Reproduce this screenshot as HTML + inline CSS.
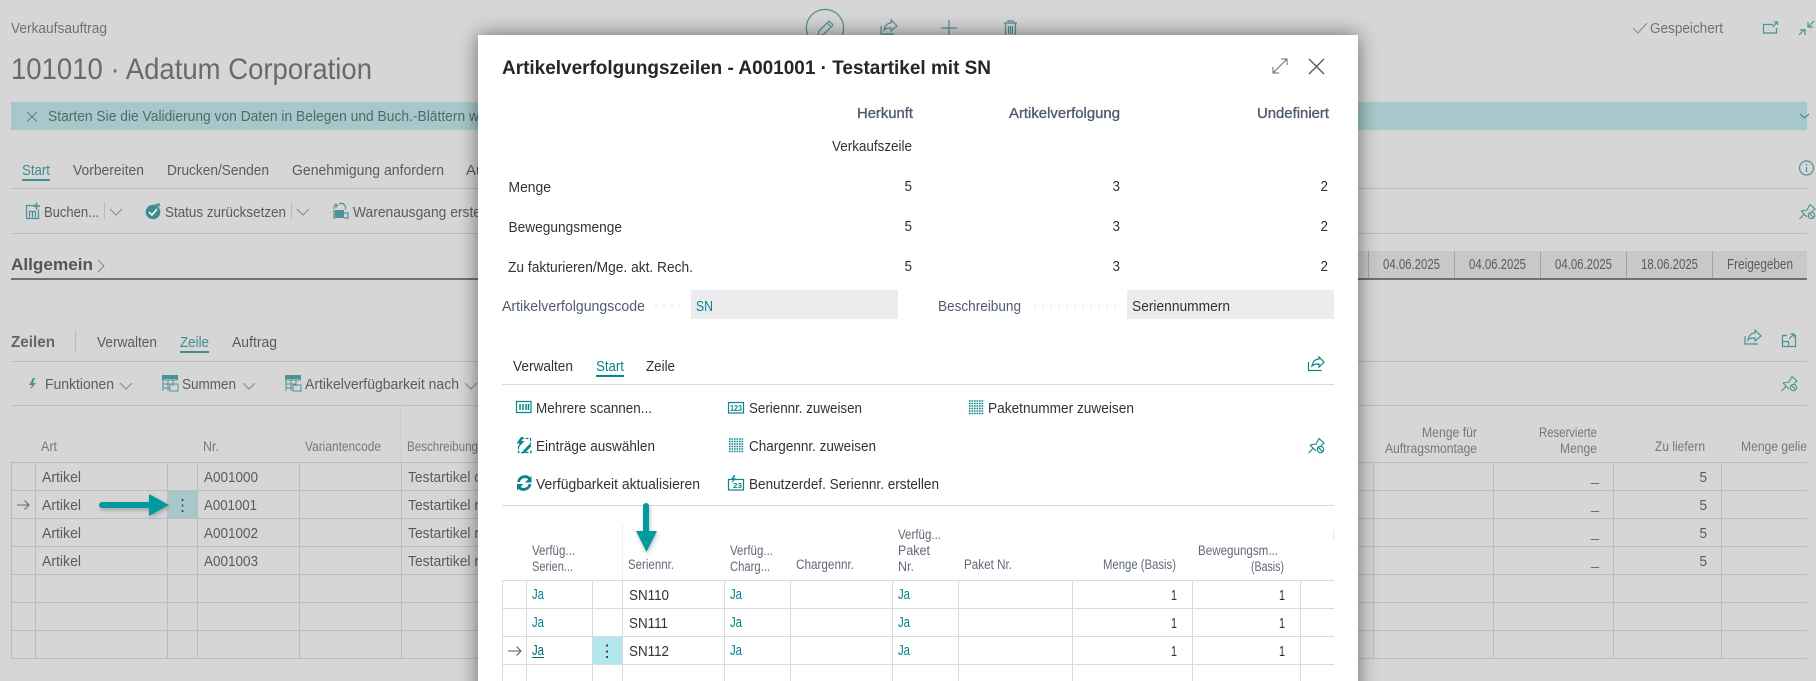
<!DOCTYPE html>
<html lang="de"><head><meta charset="utf-8"><title>Artikelverfolgungszeilen</title>
<style>
html,body{margin:0;padding:0;width:1816px;height:681px;overflow:hidden;background:#d6d6d6}
svg{display:block}
text{font-family:"Liberation Sans",sans-serif;font-size:15px;fill:#5c5c5c}
.h{font-size:13.5px;fill:#787878}
.d{font-size:14.5px}
.tl{fill:#3f8d90}
.b{font-weight:bold}
.m{fill:#333}
.mh{font-size:13.5px;fill:#5f6977}
.lb{fill:#505c6d}
.sb{font-size:14.5px;stroke:#505c6d;stroke-width:.35px}
.ja{fill:#00868b}
.g{stroke:#bcbcbc;stroke-width:1;fill:none}
.mg{stroke:#d8dadd;stroke-width:1;fill:none}
.i{stroke:#4c9194;stroke-width:1.2;fill:none}
.mi{stroke:#0a858a;stroke-width:1.2;fill:none}
.c{stroke:#7d8a8c;stroke-width:1;fill:none}
</style></head><body>
<svg xmlns="http://www.w3.org/2000/svg" width="1816" height="681" viewBox="0 0 1816 681">
<defs><filter id="sh" x="-10%" y="-20%" width="120%" height="140%"><feGaussianBlur stdDeviation="10"/></filter>
<filter id="sx" x="-10%" y="0" width="120%" height="100%"><feGaussianBlur stdDeviation="10 0"/></filter>
<clipPath id="c1"><rect x="400" y="0" width="1040" height="300"/></clipPath>
<filter id="as" x="-30%" y="-30%" width="160%" height="160%"><feDropShadow dx="1" dy="2" stdDeviation="2" flood-color="#000" flood-opacity=".25"/></filter>
<g id="pin"><path d="M.5 15l5-5M2 7l6-1 3-5.500 5 4.500-3 2.500M2 7l6 6" fill="none"/><circle cx="12.500" cy="11.500" r="3.200" fill="none"/><path d="M10.300 9.300l4.400 4.400" fill="none"/></g></defs>
<rect width="1816" height="681" fill="#d6d6d6"/>

<!-- page header -->
<text x="11" y="33" textLength="96" lengthAdjust="spacingAndGlyphs" style="fill:#6e7175;font-size:14.5px">Verkaufsauftrag</text>
<text x="11" y="79" textLength="361" lengthAdjust="spacingAndGlyphs" style="font-size:30px;fill:#6a6a6a">101010 · Adatum Corporation</text>
<circle cx="825" cy="28" r="18.6" class="i"/>
<path class="i" d="M818 36l1-5 10-10 4 4-10 10zM827 23l4 4"/>
<path class="i" d="M881 26v8h13M884 30c1-5 4-7 7-7v-3l6 6-6 5v-3c-3 0-5 0-7 2z"/>
<path class="i" stroke-width="1.5" d="M941 28h16M949 20v16"/>
<path class="i" d="M1004 23h13M1008 23v-2h5v2M1005.500 23v13h10v-13M1008.500 26v8M1010.500 26v8M1012.500 26v8"/>
<path class="c" d="M1633 28l5 5 9-10"/>
<text x="1650" y="33" textLength="73" lengthAdjust="spacingAndGlyphs" style="fill:#6e7175">Gespeichert</text>
<path class="i" d="M1773 24.500h-9.500v8.500h13v-5M1773 27l4-5M1774 22h3.500v3"/>
<path class="i" d="M1799 35l6-6M1800 30h5v5M1814 21l-6 6M1808 22v5h5"/>

<!-- banner -->
<rect x="11" y="102" width="1796" height="28" fill="#a7c8ca"/>
<path d="M27 112l10 9.500M37 112l-10 9.500" stroke="#5f7f82" fill="none"/>
<text x="48" y="121" textLength="431" lengthAdjust="spacingAndGlyphs" style="fill:#55666a">Starten Sie die Validierung von Daten in Belegen und Buch.-Blättern w</text>
<path d="M1800 114l4.500 4 4.500-4" stroke="#3f8d90" stroke-width="1.2" fill="none"/>

<!-- tabs -->
<text x="22" y="175" textLength="28" lengthAdjust="spacingAndGlyphs" class="tl">Start</text>
<rect x="22" y="179" width="28" height="2" fill="#3f8d90"/>
<text x="73" y="175" textLength="71" lengthAdjust="spacingAndGlyphs">Vorbereiten</text>
<text x="167" y="175" textLength="102" lengthAdjust="spacingAndGlyphs">Drucken/Senden</text>
<text x="292" y="175" textLength="152" lengthAdjust="spacingAndGlyphs">Genehmigung anfordern</text>
<text x="466" y="175">Aufgaben</text>
<path class="g" d="M11 188.500H1807M11 233.500H1807"/>
<circle cx="1806.500" cy="168" r="7" class="i"/><path class="i" d="M1806.500 167v5M1806.500 164v1.500"/>

<!-- command bar -->
<path class="i" d="M36 205.500h-9.500v13h12v-9M29 211.500h7M29.500 211.500v6M32.500 211.500v6M35.500 211.500v6"/>
<path d="M36.500 202.500v7M33 206h7" stroke="#4c9194" stroke-width="1.500"/>
<text x="44" y="217" textLength="55" lengthAdjust="spacingAndGlyphs">Buchen...</text>
<path class="g" d="M104.500 202v18M291.500 202v18"/>
<path class="c" d="M110 209l6 6 6-6M297 209l6 6 6-6"/>
<circle cx="153" cy="212" r="7.300" fill="#3f8d90"/><path d="M149 212l3 3 5-6" stroke="#fff" stroke-width="1.500" fill="none"/>
<path class="i" d="M155 205c2-1 4-1 5 1M159 203v3h-3"/>
<text x="165" y="217" textLength="121" lengthAdjust="spacingAndGlyphs">Status zurücksetzen</text>
<path class="i" d="M339 203.500h4l2.500 3v3M334 209v-2M336 203v5M333.500 205.500h5"/>
<rect x="335" y="210" width="9" height="8" fill="#4c9194"/>
<path class="i" d="M344 213h4v5h-4M334 210v9"/>
<text x="353" y="217" textLength="128" lengthAdjust="spacingAndGlyphs">Warenausgang erste</text>
<use href="#pin" x="1799" y="204" stroke="#4c9194" stroke-width="1.100"/>

<!-- Allgemein -->
<text x="11" y="270" textLength="82" lengthAdjust="spacingAndGlyphs" class="b" style="font-size:17px;fill:#555">Allgemein</text>
<path class="c" d="M98 260l6 6-6 6"/>
<rect x="1358" y="251" width="449" height="27" fill="#c8c8c9"/>
<path d="M1368.500 251v27M1454.500 251v27M1540.500 251v27M1626.500 251v27M1712.500 251v27" stroke="#a2a2a2"/>
<text x="1383" y="269" textLength="57" lengthAdjust="spacingAndGlyphs" class="d">04.06.2025</text>
<text x="1469" y="269" textLength="57" lengthAdjust="spacingAndGlyphs" class="d">04.06.2025</text>
<text x="1555" y="269" textLength="57" lengthAdjust="spacingAndGlyphs" class="d">04.06.2025</text>
<text x="1641" y="269" textLength="57" lengthAdjust="spacingAndGlyphs" class="d">18.06.2025</text>
<text x="1727" y="269" textLength="66" lengthAdjust="spacingAndGlyphs" class="d">Freigegeben</text>
<rect x="11" y="278" width="1796" height="2" fill="#6c7179"/>

<!-- Zeilen -->
<text x="11" y="347" textLength="44" lengthAdjust="spacingAndGlyphs" class="b" style="font-size:15.5px;fill:#666">Zeilen</text>
<path class="g" d="M75.500 330v23"/>
<text x="97" y="347" textLength="60" lengthAdjust="spacingAndGlyphs">Verwalten</text>
<text x="180" y="347" textLength="29" lengthAdjust="spacingAndGlyphs" class="tl">Zeile</text>
<rect x="180" y="351" width="29" height="2" fill="#3f8d90"/>
<text x="232" y="347" textLength="45" lengthAdjust="spacingAndGlyphs">Auftrag</text>
<path class="i" d="M1745 336v8h13M1748 340c1-5 4-7 7-7v-3l6 6-6 5v-3c-3 0-5 0-7 2z"/>
<path class="i" d="M1787 335.500h-4.500v11h13v-11h-1M1782.500 341.500h6v5M1789 339l5-5M1790.500 334h3.500v3.500"/>
<path class="g" d="M11 361.500H1807"/>
<path d="M33 378l-4 7h3l-2 5 6-7h-3l2-5z" fill="#4c9194"/>
<text x="45" y="389" textLength="69" lengthAdjust="spacingAndGlyphs">Funktionen</text>
<path class="c" d="M120 383l6 6 6-6M243 383l6 6 6-6M465 383l6 6 6-6"/>
<path d="M162.500 376h15v4h-15zM163 380v11M168 380v11M173 380v6M162.500 384h10M162.500 388h7M170 384h8v7h-8z" stroke="#4c9194" fill="none"/>
<rect x="162" y="375" width="16" height="4" fill="#4c9194"/>
<text x="182" y="389" textLength="54" lengthAdjust="spacingAndGlyphs">Summen</text>
<path d="M285.500 376h15v4h-15zM286 380v11M291 380v11M296 380v6M285.500 384h10M285.500 388h7M293 385h8v6h-8z" stroke="#4c9194" fill="none"/>
<rect x="285" y="375" width="16" height="4" fill="#4c9194"/>
<text x="305" y="389" textLength="154" lengthAdjust="spacingAndGlyphs">Artikelverfügbarkeit nach</text>
<use href="#pin" x="1781" y="376" stroke="#4c9194" stroke-width="1.100"/>
<path class="g" d="M11 405.500H1807"/>
<path d="M400.500 405v57" stroke="#cdcdcd"/>

<text x="41" y="451" textLength="16" lengthAdjust="spacingAndGlyphs" class="h">Art</text>
<text x="203" y="451" textLength="16" lengthAdjust="spacingAndGlyphs" class="h">Nr.</text>
<text x="305" y="451" textLength="76" lengthAdjust="spacingAndGlyphs" class="h">Variantencode</text>
<text x="407" y="451" textLength="71" lengthAdjust="spacingAndGlyphs" class="h">Beschreibung</text>
<text x="1422" y="437" textLength="55" lengthAdjust="spacingAndGlyphs" class="h">Menge für</text>
<text x="1385" y="453" textLength="92" lengthAdjust="spacingAndGlyphs" class="h">Auftragsmontage</text>
<text x="1539" y="437" textLength="58" lengthAdjust="spacingAndGlyphs" class="h">Reservierte</text>
<text x="1560" y="453" textLength="37" lengthAdjust="spacingAndGlyphs" class="h">Menge</text>
<text x="1655" y="451" textLength="50" lengthAdjust="spacingAndGlyphs" class="h">Zu liefern</text>
<text x="1741" y="451" textLength="66" lengthAdjust="spacingAndGlyphs" class="h">Menge gelie</text>

<!-- main grid -->
<rect x="168" y="491" width="29.500" height="27.500" fill="#a7c8ca"/>
<path class="g" d="M11 462.500H1807M11 490.500H1807M11 518.500H1807M11 546.500H1807M11 574.500H1807M11 602.500H1807M11 630.500H1807M11 658.500H1807"/>
<path class="g" d="M11.500 462v197M35.500 462v197M167.500 462v197M197.500 462v197M299.500 462v197M401.500 462v197M1373.500 462v197M1493.500 462v197M1613.500 462v197M1721.500 462v197"/>
<text x="42" y="482" textLength="39" lengthAdjust="spacingAndGlyphs">Artikel</text>
<text x="42" y="510" textLength="39" lengthAdjust="spacingAndGlyphs">Artikel</text>
<text x="42" y="538" textLength="39" lengthAdjust="spacingAndGlyphs">Artikel</text>
<text x="42" y="566" textLength="39" lengthAdjust="spacingAndGlyphs">Artikel</text>
<text x="204" y="482" textLength="54" lengthAdjust="spacingAndGlyphs">A001000</text>
<text x="204" y="510" textLength="53" lengthAdjust="spacingAndGlyphs">A001001</text>
<text x="204" y="538" textLength="54" lengthAdjust="spacingAndGlyphs">A001002</text>
<text x="204" y="566" textLength="54" lengthAdjust="spacingAndGlyphs">A001003</text>
<text x="408" y="482" textLength="74" lengthAdjust="spacingAndGlyphs">Testartikel o</text>
<text x="408" y="510" textLength="71" lengthAdjust="spacingAndGlyphs">Testartikel r</text>
<text x="408" y="538" textLength="71" lengthAdjust="spacingAndGlyphs">Testartikel r</text>
<text x="408" y="566" textLength="71" lengthAdjust="spacingAndGlyphs">Testartikel r</text>
<path d="M17 505h12M24.500 500.500l4.500 4.500-4.500 4.500" stroke="#666" fill="none"/>
<path d="M182.500 499v2M182.500 504.500v2M182.500 510v2" stroke="#444" stroke-width="1.600"/>
<text x="1699.500" y="482" textLength="7.500" lengthAdjust="spacingAndGlyphs">5</text>
<text x="1699.500" y="510" textLength="7.500" lengthAdjust="spacingAndGlyphs">5</text>
<text x="1699.500" y="538" textLength="7.500" lengthAdjust="spacingAndGlyphs">5</text>
<text x="1699.500" y="566" textLength="7.500" lengthAdjust="spacingAndGlyphs">5</text>
<text x="1591" y="481" textLength="8" lengthAdjust="spacingAndGlyphs" style="fill:#3f7a7c">_</text>
<text x="1591" y="509" textLength="8" lengthAdjust="spacingAndGlyphs" style="fill:#3f7a7c">_</text>
<text x="1591" y="537" textLength="8" lengthAdjust="spacingAndGlyphs" style="fill:#3f7a7c">_</text>
<text x="1591" y="565" textLength="8" lengthAdjust="spacingAndGlyphs" style="fill:#3f7a7c">_</text>
<g filter="url(#as)"><path d="M102 502h47v-8l20 11-20 11v-8h-47a3 3 0 0 1 0-6z" fill="#009a9e"/></g>

<!-- modal shadow + body -->
<g clip-path="url(#c1)"><rect x="478" y="35" width="880" height="365" fill="#000" opacity=".5" filter="url(#sh)"/></g>
<rect x="478" y="300" width="880" height="381" fill="#000" opacity=".5" filter="url(#sx)"/>
<rect x="478" y="35" width="880" height="646" fill="#fff"/>

<text x="502" y="74" textLength="489" lengthAdjust="spacingAndGlyphs" class="b" style="font-size:19px;fill:#262626">Artikelverfolgungszeilen - A001001 · Testartikel mit SN</text>
<path d="M1273 73l14-14M1273 67v6h6M1281 59h6v6" stroke="#6a6a6a" fill="none"/>
<path d="M1309 59l15 15M1324 59l-15 15" stroke="#5a5a5a" stroke-width="1.400" fill="none"/>

<text x="857" y="118" textLength="56" lengthAdjust="spacingAndGlyphs" class="lb sb">Herkunft</text>
<text x="1009" y="118" textLength="111" lengthAdjust="spacingAndGlyphs" class="lb sb">Artikelverfolgung</text>
<text x="1257" y="118" textLength="72" lengthAdjust="spacingAndGlyphs" class="lb sb">Undefiniert</text>
<text x="832" y="151" textLength="80" lengthAdjust="spacingAndGlyphs" class="m">Verkaufszeile</text>
<text x="508.500" y="192" textLength="42.500" lengthAdjust="spacingAndGlyphs" class="m">Menge</text>
<text x="508.500" y="232" textLength="113.500" lengthAdjust="spacingAndGlyphs" class="m">Bewegungsmenge</text>
<text x="508" y="272" textLength="185" lengthAdjust="spacingAndGlyphs" class="m">Zu fakturieren/Mge. akt. Rech.</text>
<text x="904.500" y="191" textLength="7.500" lengthAdjust="spacingAndGlyphs" class="m">5</text>
<text x="904.500" y="231" textLength="7.500" lengthAdjust="spacingAndGlyphs" class="m">5</text>
<text x="904.500" y="271" textLength="7.500" lengthAdjust="spacingAndGlyphs" class="m">5</text>
<text x="1112.500" y="191" textLength="7.500" lengthAdjust="spacingAndGlyphs" class="m">3</text>
<text x="1112.500" y="231" textLength="7.500" lengthAdjust="spacingAndGlyphs" class="m">3</text>
<text x="1112.500" y="271" textLength="7.500" lengthAdjust="spacingAndGlyphs" class="m">3</text>
<text x="1320.500" y="191" textLength="7.500" lengthAdjust="spacingAndGlyphs" class="m">2</text>
<text x="1320.500" y="231" textLength="7.500" lengthAdjust="spacingAndGlyphs" class="m">2</text>
<text x="1320.500" y="271" textLength="7.500" lengthAdjust="spacingAndGlyphs" class="m">2</text>

<text x="502" y="311" textLength="143" lengthAdjust="spacingAndGlyphs" class="lb">Artikelverfolgungscode</text>
<path d="M655 306h26" stroke="#ccc" stroke-dasharray="1.500 6.500"/>
<rect x="691" y="290" width="207" height="29" fill="#ebecee"/>
<text x="696" y="311" textLength="17" lengthAdjust="spacingAndGlyphs" class="ja">SN</text>
<text x="938" y="311" textLength="83" lengthAdjust="spacingAndGlyphs" class="lb">Beschreibung</text>
<path d="M1034 306h83" stroke="#ccc" stroke-dasharray="1.500 6.500"/>
<rect x="1127" y="290" width="207" height="29" fill="#ebecee"/>
<text x="1132" y="311" textLength="98" lengthAdjust="spacingAndGlyphs" class="m">Seriennummern</text>

<!-- modal tabs -->
<text x="513" y="371" textLength="60" lengthAdjust="spacingAndGlyphs" class="m">Verwalten</text>
<text x="596" y="371" textLength="28" lengthAdjust="spacingAndGlyphs" style="fill:#0a858a">Start</text>
<rect x="596" y="375" width="28" height="2" fill="#0a858a"/>
<text x="646" y="371" textLength="29" lengthAdjust="spacingAndGlyphs" class="m">Zeile</text>
<path class="mi" d="M1308.500 362v8.500h13M1312 366c1-5 4-7 7-7v-2l5 5-5 5v-3c-3 0-5 0-7 2z"/>
<path class="mg" d="M502 384.500H1334M502 505.500H1334"/>

<!-- modal actions -->
<path class="mi" d="M516.500 401.500h14.500v11h-14.500z"/>
<path d="M520 404v6M523 404v6M526 404v6M528.500 404v6" stroke="#0a858a" stroke-width="1.500"/>
<text x="536" y="413" textLength="116" lengthAdjust="spacingAndGlyphs" class="m">Mehrere scannen...</text>
<path class="mi" stroke-dasharray="3 1.500" d="M521 438.500h9.500v6M518.500 446v6.500h12.500v-3"/>
<path d="M521 437l-4.500 6.500h3l-2 5 7-7.500h-3l2-4z" fill="#0a858a"/><path d="M523 451l6.500-7 2 2-6.500 7-3 .5z" fill="#0a858a"/>
<text x="536" y="451" textLength="119" lengthAdjust="spacingAndGlyphs" class="m">Einträge auswählen</text>
<path d="M518.500 482a6.500 6.500 0 0 1 11-3.500M530 484a6.500 6.500 0 0 1-11 3.500" stroke="#0a858a" stroke-width="2.800" fill="none"/>
<path d="M531.500 476v6.500h-6.500zM517 490.500v-6.500h6.500z" fill="#0a858a"/>
<text x="536" y="489" textLength="164" lengthAdjust="spacingAndGlyphs" class="m">Verfügbarkeit aktualisieren</text>

<rect x="728.500" y="402.500" width="15" height="10.500" fill="none" stroke="#0a858a" stroke-width="1.200"/>
<text x="730" y="411" textLength="12" lengthAdjust="spacingAndGlyphs" class="b" style="font-size:8px;fill:#0a858a">123</text>
<text x="749" y="413" textLength="113" lengthAdjust="spacingAndGlyphs" class="m">Seriennr. zuweisen</text>
<path d="M729 439h14.500M729 441.500h14.500M729 444h14.500M729 446.500h14.500M729 449h14.500M729 451.500h14.500" stroke="#0a858a" stroke-width="1.500" stroke-dasharray="1.600 .9"/>
<text x="749" y="451" textLength="127" lengthAdjust="spacingAndGlyphs" class="m">Chargennr. zuweisen</text>
<rect x="728.500" y="479.500" width="15" height="10.500" fill="none" stroke="#0a858a" stroke-width="1.200"/>
<path d="M734 475l-3.500 5h2.500l-2 4 5-5.500h-2.500l2-3.500z" fill="#0a858a"/>
<text x="733" y="488" textLength="9" lengthAdjust="spacingAndGlyphs" class="b" style="font-size:7px;fill:#0a858a">23</text>
<text x="749" y="489" textLength="190" lengthAdjust="spacingAndGlyphs" class="m">Benutzerdef. Seriennr. erstellen</text>
<path d="M969 401h14.500M969 403.500h14.500M969 406h14.500M969 408.500h14.500M969 411h14.500M969 413.500h14.500" stroke="#0a858a" stroke-width="1.500" stroke-dasharray="1.600 .9"/>
<text x="988" y="413" textLength="146" lengthAdjust="spacingAndGlyphs" class="m">Paketnummer zuweisen</text>
<use href="#pin" x="1308" y="438" stroke="#0a858a" stroke-width="1.100"/>

<!-- modal grid header -->
<path d="M622.500 524v56" stroke="#eeeff0"/>
<path d="M1333.500 530v9" stroke="#e4e5e7"/>
<text x="532" y="555" textLength="43" lengthAdjust="spacingAndGlyphs" class="mh">Verfüg...</text>
<text x="532" y="571" textLength="41" lengthAdjust="spacingAndGlyphs" class="mh">Serien...</text>
<text x="628" y="569" textLength="46" lengthAdjust="spacingAndGlyphs" class="mh">Seriennr.</text>
<text x="730" y="555" textLength="43" lengthAdjust="spacingAndGlyphs" class="mh">Verfüg...</text>
<text x="730" y="571" textLength="40" lengthAdjust="spacingAndGlyphs" class="mh">Charg...</text>
<text x="796" y="569" textLength="58" lengthAdjust="spacingAndGlyphs" class="mh">Chargennr.</text>
<text x="898" y="539" textLength="43" lengthAdjust="spacingAndGlyphs" class="mh">Verfüg...</text>
<text x="898" y="555" textLength="32" lengthAdjust="spacingAndGlyphs" class="mh">Paket</text>
<text x="898" y="571" textLength="16" lengthAdjust="spacingAndGlyphs" class="mh">Nr.</text>
<text x="964" y="569" textLength="48" lengthAdjust="spacingAndGlyphs" class="mh">Paket Nr.</text>
<text x="1103" y="569" textLength="73" lengthAdjust="spacingAndGlyphs" class="mh">Menge (Basis)</text>
<text x="1198" y="555" textLength="80" lengthAdjust="spacingAndGlyphs" class="mh">Bewegungsm...</text>
<text x="1251" y="571" textLength="33" lengthAdjust="spacingAndGlyphs" class="mh">(Basis)</text>

<!-- modal grid -->
<rect x="593" y="637" width="29.500" height="27.500" fill="#b2e8ec"/>
<path class="mg" d="M502 580.500H1334M502 608.500H1334M502 636.500H1334M502 664.500H1334"/>
<path class="mg" d="M502.500 580v101M526.500 580v101M592.500 580v101M622.500 580v101M724.500 580v101M790.500 580v101M892.500 580v101M958.500 580v101M1072.500 580v101M1192.500 580v101M1300.500 580v101"/>
<text x="532" y="599" textLength="12" lengthAdjust="spacingAndGlyphs" class="ja">Ja</text>
<text x="532" y="627" textLength="12" lengthAdjust="spacingAndGlyphs" class="ja">Ja</text>
<text x="532" y="655" textLength="12" lengthAdjust="spacingAndGlyphs" class="ja" style="fill:#006a6e">Ja</text>
<rect x="532" y="657" width="12" height="1" fill="#006a6e"/>
<text x="730" y="599" textLength="12" lengthAdjust="spacingAndGlyphs" class="ja">Ja</text>
<text x="730" y="627" textLength="12" lengthAdjust="spacingAndGlyphs" class="ja">Ja</text>
<text x="730" y="655" textLength="12" lengthAdjust="spacingAndGlyphs" class="ja">Ja</text>
<text x="898" y="599" textLength="12" lengthAdjust="spacingAndGlyphs" class="ja">Ja</text>
<text x="898" y="627" textLength="12" lengthAdjust="spacingAndGlyphs" class="ja">Ja</text>
<text x="898" y="655" textLength="12" lengthAdjust="spacingAndGlyphs" class="ja">Ja</text>
<text x="629" y="600" textLength="40" lengthAdjust="spacingAndGlyphs" class="m">SN110</text>
<text x="629" y="628" textLength="39" lengthAdjust="spacingAndGlyphs" class="m">SN111</text>
<text x="629" y="656" textLength="40" lengthAdjust="spacingAndGlyphs" class="m">SN112</text>
<path d="M508 651h13M516.500 646.500l4.500 4.500-4.500 4.500" stroke="#555" fill="none"/>
<path d="M607 644.500v2M607 650.500v2M607 656v2" stroke="#333" stroke-width="1.800"/>
<text x="1171" y="600" textLength="6" lengthAdjust="spacingAndGlyphs" class="m">1</text>
<text x="1171" y="628" textLength="6" lengthAdjust="spacingAndGlyphs" class="m">1</text>
<text x="1171" y="656" textLength="6" lengthAdjust="spacingAndGlyphs" class="m">1</text>
<text x="1279" y="600" textLength="6" lengthAdjust="spacingAndGlyphs" class="m">1</text>
<text x="1279" y="628" textLength="6" lengthAdjust="spacingAndGlyphs" class="m">1</text>
<text x="1279" y="656" textLength="6" lengthAdjust="spacingAndGlyphs" class="m">1</text>

<g filter="url(#as)"><path d="M643 506a3 3 0 0 1 6 0v25h8l-10.500 21-10.500-21h7z" fill="#009a9e"/></g>
</svg>
</body></html>
